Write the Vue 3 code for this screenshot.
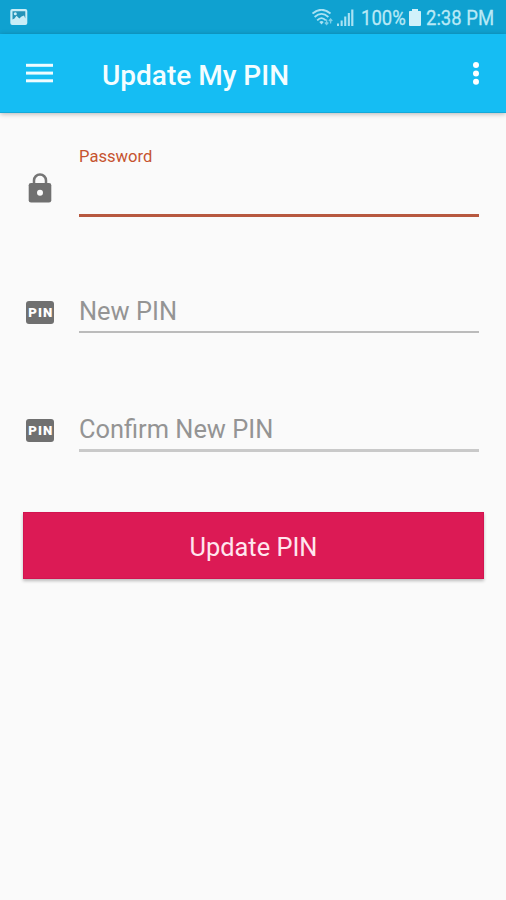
<script setup>
import { ref } from 'vue'

const fields = ref([
  { id: 'new', label: 'New PIN', value: '' },
  { id: 'confirm', label: 'Confirm New PIN', value: '' },
])
</script>

<template>
  <div class="screen">
    <header class="status">
      <svg class="picture" width="18" height="16" viewBox="0 0 18 16">
        <rect x="0.300" y="0" width="17" height="16" rx="2" fill="#c9edf7" />
        <path d="M2.500 2.300H15.300V9.500L14 6.500 11.500 7.500 9.300 9.500 6.500 6.800 4.500 9.500 2.500 10.500z" fill="#2493b8" />
        <circle cx="5.300" cy="4.800" r="1.500" fill="#c9edf7" />
      </svg>
      <div class="indicators">
        <svg class="wifi" width="23" height="18" viewBox="0 0 23 18" fill="none" stroke="#a9e2f3" stroke-width="1.800">
          <path d="M0.500 4.500Q9.500 -3 18.500 4.500" />
          <path d="M2.600 8Q9.500 1.700 16.400 8" />
          <path d="M5.200 11.300Q9.500 6.800 13.800 11.300" />
          <path d="M7.300 13Q9.500 10.900 11.700 13L9.500 15.600z" fill="#a9e2f3" stroke="none" />
          <path d="M14.600 10.500v5M12.900 13.500l1.700 2 1.700-2M18.600 14.500v-4.500M16.900 12l1.700-2 1.700 2" stroke-width="1.300" opacity=".7" />
        </svg>
        <svg class="signal" width="17" height="17" viewBox="0 0 17 17" fill="#a9e2f3">
          <rect x="0" y="14.500" width="2" height="2.500" />
          <rect x="3.600" y="11.500" width="2.100" height="5.500" />
          <rect x="7.200" y="7.500" width="2.100" height="9.500" />
          <rect x="10.800" y="4" width="2.100" height="13" />
          <rect x="14.200" y="0.500" width="2.200" height="16.500" />
        </svg>
        <span class="percent"><span class="narrow">100%</span></span>
        <svg class="battery" width="12" height="17" viewBox="0 0 12 17" fill="#d0f1fa">
          <path d="M3 0h6v2h2.200q.8 0 .8.8V16q0 1-1 1H1q-1 0-1-1V2.800q0-.8.8-.8H3z" />
        </svg>
        <span class="time"><span class="narrow">2:38 PM</span></span>
      </div>
    </header>

    <nav class="toolbar">
      <svg class="menu" width="27" height="20" viewBox="0 0 27 20" fill="#effcff">
        <rect y="0.800" width="27" height="3" />
        <rect y="8.600" width="27" height="3" />
        <rect y="16.300" width="27" height="3" />
      </svg>
      <h1 class="title">Update My PIN</h1>
      <svg class="more" width="8" height="24" viewBox="0 0 8 24" fill="#fff">
        <circle cx="4" cy="4" r="3" />
        <circle cx="4" cy="12.400" r="3" />
        <circle cx="4" cy="20.800" r="3" />
      </svg>
    </nav>

    <main class="form">
      <div class="row password">
        <svg class="lock" width="24" height="30" viewBox="0 0 24 30">
          <path d="M6 12V7.500a6 6 0 0 1 12 0V12" fill="none" stroke="#757575" stroke-width="2.500" />
          <path d="M3 10h18q2.300 0 2.300 2.300V27.200q0 2.300-2.300 2.300H3Q.7 29.500.7 27.200V12.300Q.7 10 3 10z" fill="#707070" />
          <circle cx="12" cy="19.700" r="3" fill="#fafafa" />
        </svg>
        <div class="field focused"><label>Password</label></div>
      </div>
      <div v-for="field in fields" :key="field.id" class="row" :class="field.id">
        <span class="pin-icon"><span>PIN</span></span>
        <div class="field"><label>{{ field.label }}</label></div>
      </div>
      <button class="submit" type="button"><span>Update PIN</span></button>
    </main>
  </div>
</template>

<style>
body {
  background: #fafafa;
}
</style>

<style scoped>
.screen {
  height: 900px;
  overflow: hidden;
  background: #fafafa;
  font-family: Roboto, sans-serif;
}

.status {
  display: flex;
  box-sizing: border-box;
  height: 34px;
  padding: 9px 11px 0 10px;
  justify-content: space-between;
  background: #0fa1d0;
  color: #b9e9f6;
}

.indicators {
  display: flex;
}

.signal {
  margin: 0 7px 0 2px;
}

.percent,
.time {
  font-size: 21px;
  line-height: 18px;
  white-space: nowrap;
  -webkit-text-stroke: 0.3px currentColor;
}

.percent {
  width: 45px;
  margin-right: 3px;
}

.time {
  width: 69px;
  margin-left: 5px;
}

.narrow {
  display: inline-block;
  transform: scaleX(0.88);
  transform-origin: left;
}

.toolbar {
  display: flex;
  box-sizing: border-box;
  height: 79px;
  padding: 0 26px 1px 26px;
  align-items: center;
  background: #15bdf3;
  border-bottom: 1px solid #13a9d9;
  box-shadow: 0 1px 5px rgba(0, 0, 0, 0.28);
}

.title {
  margin: 7px 0 0 49px;
  color: #f4fdff;
  font-size: 28px;
  font-weight: 500;
  line-height: 34px;
}

.more {
  margin-left: auto;
}

.form {
  padding: 35px 22px 0 23px;
}

.row {
  display: flex;
  padding-right: 5px;
}

.password {
  height: 69px;
}

.lock {
  flex: none;
  margin: 25px 27px 0 5px;
}

.field {
  flex: 1;
  box-sizing: border-box;
  border-bottom: 2px solid #bbb;
  color: #949494;
  font-size: 25.400px;
  line-height: 32px;
}

.field label {
  display: block;
}

.focused {
  border-bottom: 3px solid #b7583f;
  color: #c6532f;
  font-size: 16.600px;
  line-height: 18px;
}

.new {
  height: 38px;
  margin-top: 78px;
}

.confirm {
  height: 39px;
  margin-top: 80px;
}

.confirm .field {
  border-bottom: 3px solid #c9c9c9;
}

.pin-icon {
  flex: none;
  width: 28px;
  height: 23px;
  margin: 6px 25px 0 3px;
  border-radius: 3px;
  background: #707070;
  color: #fff;
  font-size: 12.500px;
  font-weight: 900;
  letter-spacing: 1px;
  line-height: 23px;
  text-align: center;
  text-indent: 1px;
}

.pin-icon span {
  display: inline-block;
  margin: 0 -3px;
  transform: scaleX(1.06);
}

.submit {
  display: block;
  width: 461px;
  height: 67px;
  margin-top: 60px;
  padding: 2px 0 0;
  border: 1px solid #d21450;
  background: #dc1a55;
  box-shadow: 0 2px 3px rgba(0, 0, 0, 0.25);
  color: #ffe6ee;
  font-family: inherit;
  font-size: 25.400px;
}
</style>
